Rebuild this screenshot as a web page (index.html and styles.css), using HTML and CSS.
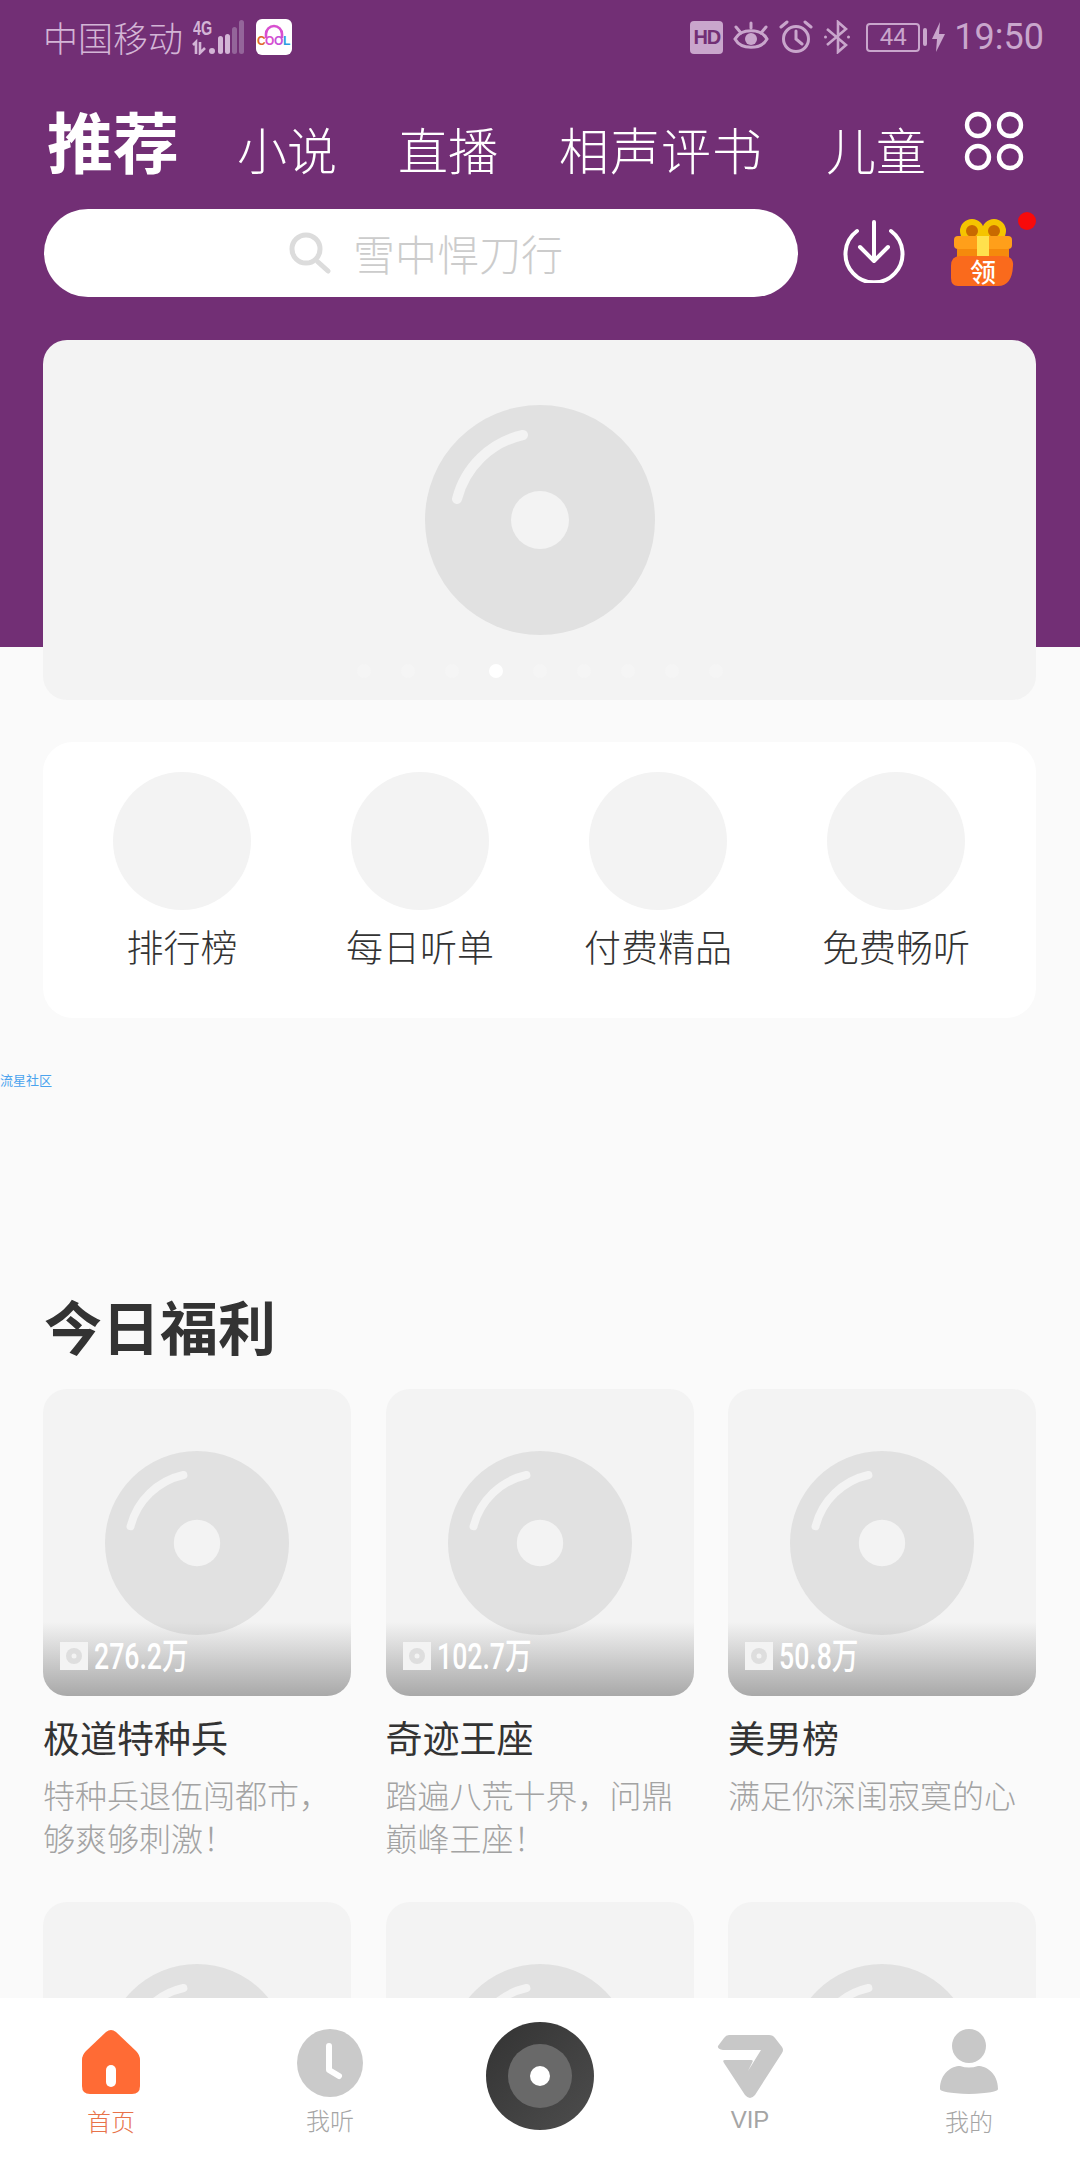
FILE: index.html
```html
<!DOCTYPE html>
<html lang="zh-CN">
<head>
<meta charset="utf-8">
<title>推荐</title>
<link rel="stylesheet" href="styles.css">
</head>
<body>
<svg class="defs" width="0" height="0" aria-hidden="true">
  <symbol id="disc" viewBox="0 0 230 230">
    <circle cx="115" cy="115" r="115" fill="#e1e1e1"/>
    <circle cx="115" cy="115" r="29" fill="#f3f3f3"/>
    <path d="M98 30A88 88 0 0 0 32 94" fill="none" stroke="#f3f3f3" stroke-width="10" stroke-linecap="round"/>
  </symbol>
</svg>
<div class="page">
  <main class="main">
    <div class="hero">
      <div class="status">
        <div class="status-left">
          <span class="carrier">中国移动</span>
          <span class="signal">
            <span class="net">4G</span>
            <svg class="signal-bars" width="54" height="35" viewBox="0 0 54 35">
              <path d="M4 34V22L1 25M8 22V33L13 28" fill="none" stroke="#d3b5d6" stroke-width="2.6"/>
              <circle cx="20" cy="31" r="3" fill="#d3b5d6"/>
              <rect x="26" y="16" width="5" height="18" rx="2.5" fill="#d3b5d6"/>
              <rect x="33" y="14" width="5" height="20" rx="2.5" fill="#d3b5d6"/>
              <rect x="40" y="7" width="5" height="27" rx="2.5" fill="#94659a"/>
              <rect x="47" y="0" width="5" height="34" rx="2.5" fill="#94659a"/>
            </svg>
          </span>
          <span class="app-badge">
            <svg width="36" height="36" viewBox="0 0 36 36">
              <path d="M10 19V15a8 8 0 0 1 16 0v4" fill="none" stroke="#d84fd0" stroke-width="2.6"/>
              <text x="1" y="26" class="cool c1">C</text>
              <text x="9" y="26" class="cool c2">O</text>
              <text x="18" y="26" class="cool c3">O</text>
              <text x="27" y="26" class="cool c4">L</text>
            </svg>
          </span>
        </div>
        <div class="status-right">
          <span class="hd">HD</span>
          <svg width="36" height="32" viewBox="0 0 36 32" fill="none" stroke="#c9a6cc" stroke-width="3">
            <path d="M2 18C8 7 28 7 34 18C28 29 8 29 2 18Z"/>
            <circle cx="18" cy="18" r="6" fill="#c9a6cc" stroke="none"/>
            <path d="M3 6l5 6M33 6l-5 6M18 2v5" stroke-linecap="round"/>
          </svg>
          <svg width="34" height="34" viewBox="0 0 34 34" fill="none" stroke="#c9a6cc" stroke-width="3">
            <circle cx="17" cy="19" r="12.5"/>
            <path d="M17 11v8l6 5M2 7l6-5M32 7l-6-5" stroke-linecap="round"/>
          </svg>
          <svg width="28" height="34" viewBox="0 0 28 34" fill="none" stroke="#c9a6cc" stroke-width="2.6">
            <path d="M4 9l19 16l-8 7V2l8 7L4 25"/>
            <circle cx="2.5" cy="17" r="1.5" fill="#c9a6cc" stroke="none"/>
            <circle cx="25.5" cy="17" r="1.5" fill="#c9a6cc" stroke="none"/>
          </svg>
          <span class="battery"><span class="battery-box">44</span><span class="battery-nub"></span></span>
          <svg width="13" height="30" viewBox="0 0 13 30"><path d="M8 0L0 17h5l-1 13L13 12H7z" fill="#c9a6cc"/></svg>
          <span class="time">19:50</span>
        </div>
      </div>

      <nav class="tabs">
        <a class="tab tab-active">推荐</a>
        <a class="tab">小说</a>
        <a class="tab">直播</a>
        <a class="tab">相声评书</a>
        <a class="tab">儿童</a>
        <svg class="tab-grid" width="60" height="60" viewBox="0 0 60 60" fill="none" stroke="#fff" stroke-width="4.4">
          <circle cx="14" cy="14" r="11"/><circle cx="46" cy="14" r="11"/>
          <circle cx="14" cy="46" r="11"/><circle cx="46" cy="46" r="11"/>
        </svg>
      </nav>

      <div class="search-row">
        <div class="search">
          <svg class="search-icon" width="42" height="42" viewBox="0 0 42 42" fill="none" stroke="#dcdcdc" stroke-width="5">
            <circle cx="17" cy="17" r="14"/>
            <path d="M29 30l10 9" stroke-linecap="round"/>
          </svg>
          <span>雪中悍刀行</span>
        </div>
        <svg class="download" width="64" height="64" viewBox="0 0 64 64" fill="none" stroke="#fff" stroke-width="4" stroke-linecap="round" stroke-linejoin="round">
          <path d="M15 12A28.5 28.5 0 1 0 49 12"/>
          <path d="M32 3V41M18 28L32 42L46 28"/>
        </svg>
        <div class="gift">
          <svg width="66" height="70" viewBox="0 0 66 70">
            <circle cx="22" cy="13" r="9" fill="#c96a00" stroke="#f5c400" stroke-width="6"/>
            <circle cx="44" cy="13" r="9" fill="#c96a00" stroke="#f5c400" stroke-width="6"/>
            <rect x="4" y="18" width="58" height="13" rx="4" fill="#ff9f1a"/>
            <rect x="7" y="31" width="52" height="16" fill="#f58a0c"/>
            <rect x="27" y="18" width="12" height="30" fill="#ffe14d"/>
            <path d="M10 38H53Q64 38 63 48Q62 68 48 68H8Q1 68 1 60V48Q1 38 10 38Z" fill="#fa6a1c"/>
            <text x="33" y="64" class="gift-text">领</text>
          </svg>
          <span class="gift-dot"></span>
        </div>
      </div>

      <section class="banner">
        <svg class="banner-disc" width="230" height="230"><use href="#disc"/></svg>
        <div class="dots">
          <i class="dot"></i><i class="dot"></i><i class="dot"></i><i class="dot dot-on"></i><i class="dot"></i><i class="dot"></i><i class="dot"></i><i class="dot"></i><i class="dot"></i>
        </div>
      </section>
    </div>

    <section class="shortcuts">
      <div class="shortcut"><span class="shortcut-ico"></span><span>排行榜</span></div>
      <div class="shortcut"><span class="shortcut-ico"></span><span>每日听单</span></div>
      <div class="shortcut"><span class="shortcut-ico"></span><span>付费精品</span></div>
      <div class="shortcut"><span class="shortcut-ico"></span><span>免费畅听</span></div>
    </section>

    <p class="ad-label">流星社区</p>

    <h2 class="section-title">今日福利</h2>

    <section class="cards">
      <article class="card">
        <div class="cover">
          <svg class="cover-disc" width="184" height="184"><use href="#disc"/></svg>
          <div class="plays"><svg class="plays-ico" width="28" height="28" viewBox="0 0 28 28"><rect width="28" height="28" fill="#f3f3f3"/><circle cx="14" cy="14" r="8" fill="#dedede"/><circle cx="14" cy="14" r="2.5" fill="#f3f3f3"/></svg><span class="plays-num">276.2万</span></div>
        </div>
        <h3 class="card-title">极道特种兵</h3>
        <p class="card-desc">特种兵退伍闯都市，够爽够刺激！</p>
      </article>
      <article class="card">
        <div class="cover">
          <svg class="cover-disc" width="184" height="184"><use href="#disc"/></svg>
          <div class="plays"><svg class="plays-ico" width="28" height="28" viewBox="0 0 28 28"><rect width="28" height="28" fill="#f3f3f3"/><circle cx="14" cy="14" r="8" fill="#dedede"/><circle cx="14" cy="14" r="2.5" fill="#f3f3f3"/></svg><span class="plays-num">102.7万</span></div>
        </div>
        <h3 class="card-title">奇迹王座</h3>
        <p class="card-desc">踏遍八荒十界，问鼎巅峰王座！</p>
      </article>
      <article class="card">
        <div class="cover">
          <svg class="cover-disc" width="184" height="184"><use href="#disc"/></svg>
          <div class="plays"><svg class="plays-ico" width="28" height="28" viewBox="0 0 28 28"><rect width="28" height="28" fill="#f3f3f3"/><circle cx="14" cy="14" r="8" fill="#dedede"/><circle cx="14" cy="14" r="2.5" fill="#f3f3f3"/></svg><span class="plays-num">50.8万</span></div>
        </div>
        <h3 class="card-title">美男榜</h3>
        <p class="card-desc">满足你深闺寂寞的心</p>
      </article>
      <article class="card"><div class="cover"><svg class="cover-disc" width="184" height="184"><use href="#disc"/></svg></div></article>
      <article class="card"><div class="cover"><svg class="cover-disc" width="184" height="184"><use href="#disc"/></svg></div></article>
      <article class="card"><div class="cover"><svg class="cover-disc" width="184" height="184"><use href="#disc"/></svg></div></article>
    </section>
  </main>

  <footer class="tabbar">
    <a class="bar-item bar-on">
      <svg width="58" height="66" viewBox="0 0 58 66">
        <path d="M24 3Q29 -1 34 3L54 22Q58 26 58 31V57Q58 65 50 65H8Q0 65 0 57V31Q0 26 4 22Z" fill="#ff6b35"/>
        <rect x="24" y="36" width="10" height="22" rx="5" fill="#fff"/>
      </svg>
      <span>首页</span>
    </a>
    <a class="bar-item bar-listen">
      <svg width="66" height="68" viewBox="0 0 66 68">
        <ellipse cx="33" cy="34" rx="33" ry="34" fill="#cacaca"/>
        <path d="M32 17V41L42 47" fill="none" stroke="#fff" stroke-width="6" stroke-linecap="round" stroke-linejoin="round"/>
      </svg>
      <span>我听</span>
    </a>
    <a class="bar-item bar-disc">
      <svg width="108" height="108" viewBox="0 0 108 108">
        <defs><linearGradient id="rec" x1="0" y1="0" x2="1" y2="1"><stop offset="0" stop-color="#333"/><stop offset="1" stop-color="#4d4d4d"/></linearGradient></defs>
        <circle cx="54" cy="54" r="54" fill="url(#rec)"/>
        <circle cx="54" cy="54" r="32" fill="#696969"/>
        <circle cx="54" cy="54" r="10" fill="#fff"/>
      </svg>
    </a>
    <a class="bar-item bar-vip">
      <svg width="66" height="64" viewBox="0 0 66 64">
        <path d="M12 0H52Q56 0 58 3L65 12Q67 15 65 18L38 60Q33 66 28 60L7 28Q5 25 8 25H34Q37 25 35 28L31 36L44 15H6Q0 14 1 11L7 3Q9 0 12 0Z" fill="#c8c8c8"/>
      </svg>
      <span>VIP</span>
    </a>
    <a class="bar-item">
      <svg width="58" height="66" viewBox="0 0 58 66" fill="#c8c8c8">
        <circle cx="29" cy="17" r="17"/>
        <path d="M0 60C0 44 12 37 20 37Q29 40 38 37C46 37 58 44 58 60Q58 64 29 65Q0 64 0 60Z"/>
      </svg>
      <span>我的</span>
    </a>
  </footer>
</div>
</body>
</html>
```

FILE: styles.css
```css
* { box-sizing: border-box; }
html, body { margin: 0; padding: 0; }
body {
  width: 1080px;
  height: 2160px;
  overflow: hidden;
  background: #fafafa;
  font-family: "Noto Sans CJK SC", "Noto Sans", sans-serif;
}
.defs { position: absolute; }
.page { display: flex; flex-direction: column; height: 2160px; }
.main { flex: 1; min-height: 0; overflow: hidden; }

/* hero */
.hero {
  padding: 0 44px 0 43px;
  background: linear-gradient(#722f75 647px, transparent 647px);
}
.status {
  height: 74px;
  display: flex;
  justify-content: space-between;
  align-items: center;
  color: #c9a6cc;
}
.status-left, .status-right { display: flex; align-items: center; }
.carrier { font-size: 35px; line-height: 40px; color: #d3b5d6; font-weight: 300; }
.signal { position: relative; display: block; width: 54px; height: 35px; margin-left: 9px; }
.net {
  position: absolute; left: 1px; top: -2px;
  font: 700 20px/20px "Liberation Sans", sans-serif;
  color: #d3b5d6;
  transform: scaleX(.72);
  transform-origin: left top;
}
.signal-bars { display: block; }
.app-badge {
  width: 36px; height: 36px; margin-left: 10px;
  background: #fff; border-radius: 6px; overflow: hidden;
}
.app-badge svg { display: block; }
.cool { font: 700 12px "Liberation Sans", sans-serif; }
.c1 { fill: #e0672b; } .c2 { fill: #d84fd0; } .c3 { fill: #c84fd8; } .c4 { fill: #2d9be0; }
.status-right { gap: 10px; margin-right: -8px; }
.hd {
  width: 33px; height: 33px;
  background: #c9a6cc; border-radius: 4px;
  font: 700 20px/33px "Liberation Sans", sans-serif;
  text-align: center; color: #722f75;
  letter-spacing: -1px;
}
.battery { display: flex; align-items: center; gap: 3px; margin-left: 5px; margin-right: -5px; }
.battery-box {
  width: 54px; height: 29px;
  border: 2px solid #c9a6cc; border-radius: 4px;
  font: 400 24px/25px Roboto, sans-serif;
  text-align: center; color: #c9a6cc;
}
.battery-nub { width: 4px; height: 18px; background: #c9a6cc; border-radius: 2px; }
.time { font: 400 36px/40px Roboto, sans-serif; color: #c9a6cc; margin-left: -1px; }

/* tabs */
.tabs {
  height: 72px;
  margin-top: 27px;
  display: flex;
  align-items: flex-end;
  color: #fff;
  padding-left: 4px;
}
.tab { font-size: 50px; line-height: 49px; font-weight: 300; margin-right: 61px; white-space: nowrap; }
.tab:nth-child(4) { margin-right: 63px; letter-spacing: 1px; }
.tab:nth-child(5) { margin-right: 38px; }
.tab-active { font-size: 66px; line-height: 68px; font-weight: 700; margin-right: 58px; }
.tab-grid { flex: none; margin-bottom: 2px; }

/* search */
.search-row { display: flex; align-items: center; margin-top: 36px; }
.search {
  width: 754px; height: 88px; margin-left: 1px; padding-left: 10px;
  background: #fff; border-radius: 44px;
  display: flex; align-items: center; justify-content: center; gap: 22px;
  font-size: 42px; line-height: 50px; font-weight: 300; color: #cccccc;
}
.download { margin-left: 44px; margin-top: -5px; }
.gift { position: relative; margin-left: 44px; height: 70px; width: 66px; }
.gift svg { display: block; }
.gift-text { font-size: 26px; font-weight: 500; fill: #fff; text-anchor: middle; }
.gift-dot {
  position: absolute; right: -20px; top: -6px;
  width: 18px; height: 18px; border-radius: 50%; background: #f80a0a;
}

/* banner */
.banner {
  position: relative;
  height: 360px; margin-top: 43px;
  background: #f3f3f3; border-radius: 24px;
  display: flex; justify-content: center; padding-top: 65px;
}
.banner-disc { display: block; }
.dots {
  position: absolute; left: 0; right: 0; top: 324px;
  display: flex; justify-content: center; gap: 30px;
}
.dot { width: 14px; height: 14px; border-radius: 50%; background: #f5f5f5; }
.dot-on { background: #fff; }

/* shortcuts */
.shortcuts {
  margin: 42px 44px 0 43px; height: 276px;
  padding: 30px 21px 0 20px;
  background: #fff; border-radius: 30px;
  display: grid; grid-template-columns: repeat(4, 1fr);
}
.shortcut {
  display: flex; flex-direction: column; align-items: center;
  font-size: 37px; line-height: 50px; color: #333; font-weight: 300;
}
.shortcut-ico { width: 138px; height: 138px; border-radius: 50%; background: #f3f3f3; margin-bottom: 11px; }

.ad-label {
  margin: 54px 0 0; font-size: 13px; line-height: 16px; color: #4ba3ee;
}

.section-title {
  margin: 202px 0 0 44px;
  font-size: 58px; line-height: 70px; font-weight: 700; color: #333;
}

/* cards */
.cards {
  margin: 29px 44px 0 43px;
  display: grid; grid-template-columns: repeat(3, 308px);
  justify-content: space-between; row-gap: 43px;
}
.cover {
  position: relative; height: 307px;
  background: #f3f3f3; border-radius: 24px; overflow: hidden;
  display: flex; align-items: center; justify-content: center;
}
.cover-disc { display: block; }
.plays {
  position: absolute; left: 0; right: 0; bottom: 0; height: 74px;
  padding: 20px 0 0 17px;
  display: flex; align-items: flex-start;
  background: linear-gradient(rgba(150,150,150,0), rgba(150,150,150,.8));
}
.plays-ico { flex: none; }
.plays-num {
  margin-left: 6px;
  font: 500 36px/30px Roboto, "Noto Sans CJK SC", sans-serif;
  color: #fff;
  transform: scaleX(.74);
  transform-origin: left center;
  white-space: nowrap;
}
.card-title {
  margin: 16px 0 0;
  font-size: 37px; line-height: 50px; font-weight: 400; color: #333;
}
.card-desc {
  margin: 11px 0 0;
  font-size: 32px; line-height: 43px; font-weight: 300; color: #a3a3a3;
}

/* tab bar */
.tabbar {
  flex: none; height: 162px;
  background: #fff;
  display: grid; grid-template-columns: 222px 216px 204px 216px 222px;
}
.bar-item {
  display: flex; flex-direction: column; align-items: center;
  padding-top: 31px;
  font-size: 24px; line-height: 30px; color: #a5a5a5; font-weight: 300;
}
.bar-item svg { display: block; margin-bottom: 11px; flex: none; }
.bar-on { color: #e8734a; }
.bar-listen svg { margin-bottom: 8px; }
.bar-disc { padding-top: 24px; }
.bar-vip { padding-top: 37px; font-family: "Liberation Sans", sans-serif; font-weight: 400; }
.bar-vip svg { margin-bottom: 6px; }
```
